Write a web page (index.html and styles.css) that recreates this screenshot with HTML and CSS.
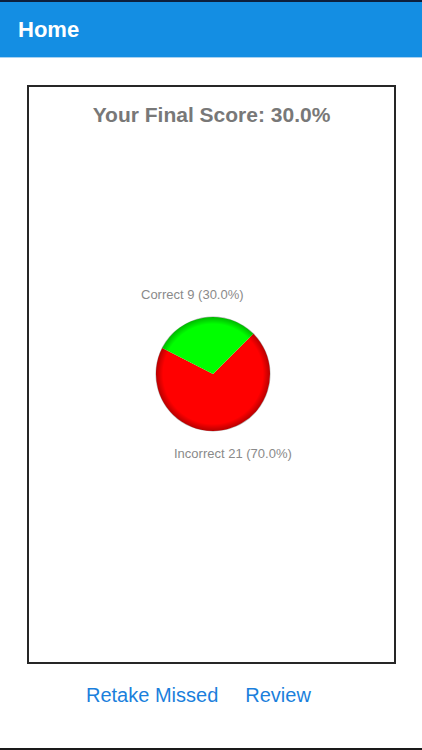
FILE: index.html
```html
<!DOCTYPE html>
<html>
<head>
<meta charset="utf-8">
<link rel="stylesheet" href="styles.css">
</head>
<body>
<div class="screen">
  <div class="topline"></div>
  <header class="navbar"><span class="nav-title">Home</span></header>
  <main class="content">
    <section class="card">
      <h1 class="score">Your Final Score: 30.0%</h1>
      <div class="chart">
        <svg class="pie" width="364" height="200" viewBox="0 0 364 200">
          <defs>
            <radialGradient id="rim" cx="183" cy="104" r="58" gradientUnits="userSpaceOnUse">
              <stop offset="0.86" stop-color="#000" stop-opacity="0"/>
              <stop offset="1" stop-color="#000" stop-opacity="0.32"/>
            </radialGradient>
          </defs>
          <text class="lbl" x="111" y="28.5">Correct 9 (30.0%)</text>
          <path d="M183 104 L223.3 63.7 A57 57 0 1 1 132.2 78.1 Z" fill="#ff0000"/>
          <path d="M183 104 L132.2 78.1 A57 57 0 0 1 223.3 63.7 Z" fill="#00ff00"/>
          <circle cx="183" cy="104" r="57.5" fill="url(#rim)"/>
          <text class="lbl" x="144" y="187.5">Incorrect 21 (70.0%)</text>
        </svg>
      </div>
    </section>
    <nav class="actions">
      <a class="action">Retake Missed</a>
      <a class="action">Review</a>
    </nav>
  </main>
  <div class="bottomline"></div>
</div>
</body>
</html>
```
FILE: styles.css
```css
html, body {
  margin: 0;
  padding: 0;
  background: #ffffff;
}
body {
  font-family: "Liberation Sans", Arial, sans-serif;
}
.screen {
  width: 422px;
  height: 750px;
  display: flex;
  flex-direction: column;
  overflow: hidden;
}
.topline {
  height: 2px;
  background: #0d1f3c;
  flex: none;
}
.navbar {
  height: 55px;
  background: #148ee3;
  border-bottom: 1px solid #a8d2f1;
  display: flex;
  align-items: center;
  padding-left: 18px;
  flex: none;
}
.nav-title {
  color: #ffffff;
  font-weight: bold;
  font-size: 22px;
}
.content {
  flex: 1;
  display: flex;
  flex-direction: column;
  padding-top: 27px;
}
.card {
  box-sizing: border-box;
  width: 369px;
  height: 579px;
  margin-left: 27px;
  border: 2px solid #262626;
  display: flex;
  flex-direction: column;
  align-items: center;
}
.score {
  margin: 16px 0 0 0;
  font-size: 21px;
  font-weight: bold;
  color: #787878;
  line-height: 24px;
}
.chart {
  margin-top: 143px;
  width: 364px;
  height: 200px;
}
.pie {
  display: block;
}
.lbl {
  font-family: "Liberation Sans", Arial, sans-serif;
  font-size: 13px;
  fill: #8a8a8a;
}
.actions {
  display: flex;
  gap: 27px;
  margin-top: 19px;
  padding-left: 86px;
}
.action {
  color: #1b7fdc;
  font-size: 20px;
  line-height: 24px;
  cursor: pointer;
}
.bottomline {
  height: 2px;
  background: #1a1a1a;
  flex: none;
}
```
